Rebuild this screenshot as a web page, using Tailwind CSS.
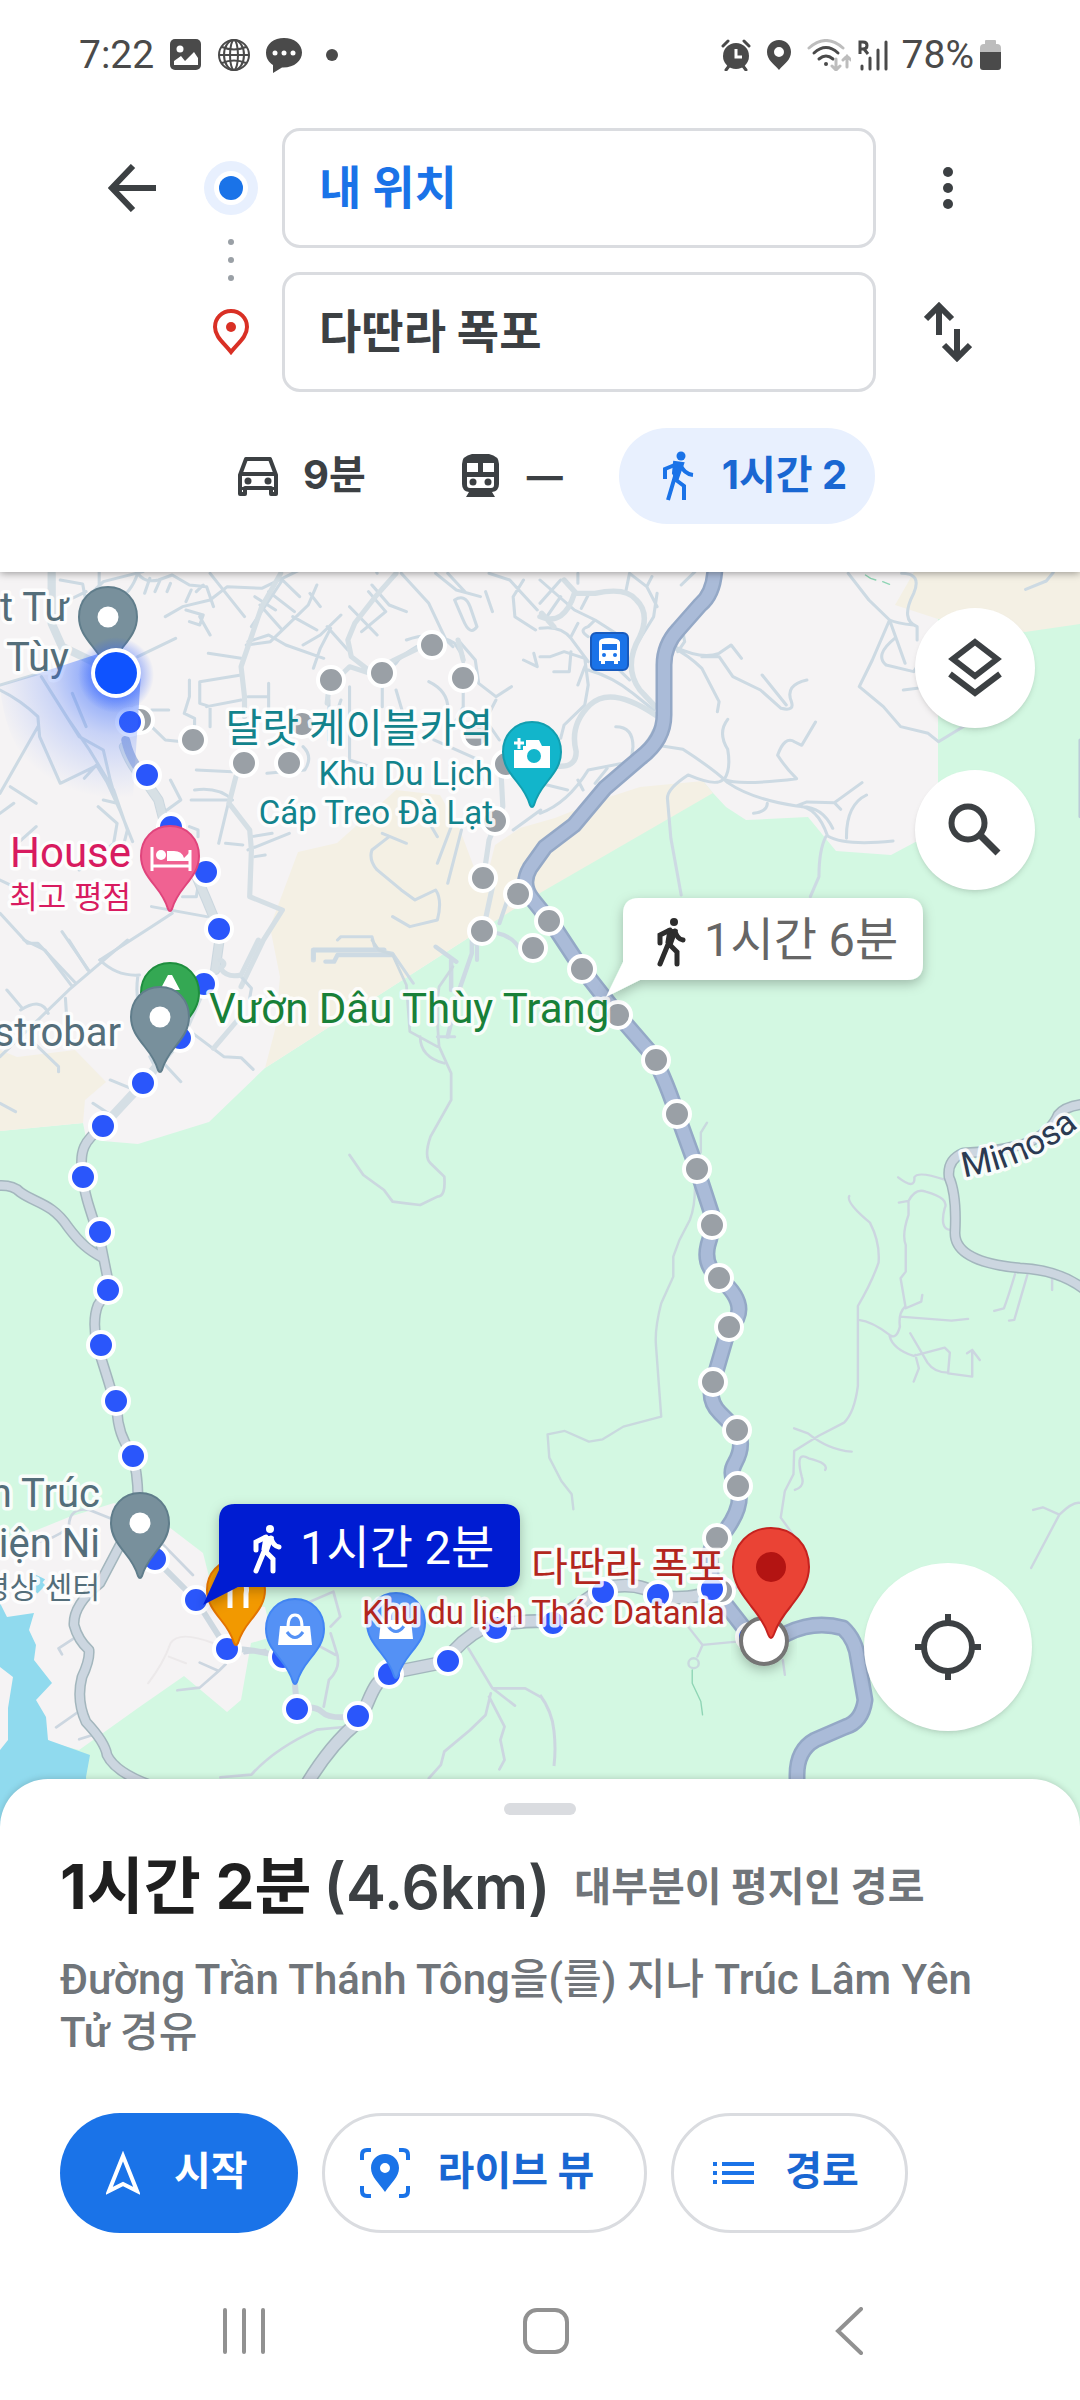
<!DOCTYPE html>
<html lang="ko">
<head>
    <meta charset="UTF-8">
    <meta name="viewport" content="width=device-width, initial-scale=1.0">
    <title>다딴라 폭포 - 도보 경로</title>
    <script src="https://cdn.jsdelivr.net/npm/@tailwindcss/browser@4"></script>
</head>
<body class="bg-white font-['Inter','Noto_Sans_CJK_KR',sans-serif] text-[#3c4043]">

    <!-- status bar -->
    <div class="relative z-20 flex h-[110px] items-center justify-between bg-white px-[79px] font-['Roboto',sans-serif] text-[39px] text-[#4a4a4a]">
        <div class="flex items-center gap-4">
            <span>7:22</span>
            <svg class="h-8 w-8" viewBox="0 0 32 32"><rect width="31" height="31" rx="5" fill="#4a4a4a"/><circle cx="10" cy="10" r="3.500" fill="#fff"/><path d="M4 22l7-5 4 5 9-9 4 6v7H4z" fill="#fff"/></svg>
            <svg class="h-8 w-8" viewBox="0 0 32 32" fill="none" stroke="#4a4a4a" stroke-width="2"><circle cx="16" cy="16" r="15"/><ellipse cx="16" cy="16" rx="10" ry="15"/><ellipse cx="16" cy="16" rx="4" ry="15"/><path d="M1 16h30M4 8q12 5 24 0M4 24q12-5 24 0"/></svg>
            <svg class="h-9 w-9" viewBox="0 0 36 36"><path d="M18 1C8 1 0 7 0 15.500c0 6 3 10 7 12.500v8l9-5.500C28 31 36 24 36 15.500 36 7 28 1 18 1z" fill="#4a4a4a"/><g fill="#fff"><circle cx="9" cy="16" r="2.500"/><circle cx="18" cy="16" r="2.500"/><circle cx="27" cy="16" r="2.500"/></g></svg>
            <span class="ml-2 h-3 w-3 rounded-full bg-[#4a4a4a]"></span>
        </div>
        <div class="flex items-center">
            <svg class="h-8 w-[30px]" viewBox="0 0 30 32"><circle cx="15" cy="17" r="13" fill="#4a4a4a"/><path d="M2 7l5-5M28 7l-5-5M5 31l3-4M25 31l-3-4" stroke="#4a4a4a" stroke-width="3" stroke-linecap="round"/><path d="M15 10v8h6" stroke="#fff" stroke-width="3" fill="none"/></svg>
            <svg class="ml-4 h-8 w-6" viewBox="0 0 24 32"><path d="M12 1C5 1 0 6 0 13c0 8 7 12 12 18 5-6 12-10 12-18C24 6 19 1 12 1zm0 7a5 5 0 110 10 5 5 0 010-10z" fill="#4a4a4a"/></svg>
            <svg class="ml-4 h-8 w-11" viewBox="0 0 44 32" fill="none" stroke-width="3" stroke-linecap="round"><path d="M2 9Q19-6 36 9" stroke="#bdbdbd"/><path d="M7 14q12-11 24 0M12 20q7-6 14 0" stroke="#4a4a4a"/><circle cx="19" cy="25" r="2" fill="#4a4a4a" stroke="none"/><path d="M29 20v11m-4-4l4 4 4-4M40 28V17m-4 4l4-4 4 4" stroke="#bdbdbd"/></svg>
            <svg class="ml-[7px] h-8 w-[30px]" viewBox="0 0 30 32" fill="none" stroke="#4a4a4a"><path d="M4 27v3M12 19v11M20 11v19M28 3v27" stroke-width="3" stroke-linecap="round"/><path d="M2 15V3h3q4 0 4 3.500T5 10H2M6 10l4 5" stroke-width="3"/></svg>
            <span class="ml-[14px]">78%</span>
            <svg class="ml-[6px] h-8 w-[21px]" viewBox="0 0 21 32"><path d="M5 2q0-1 1-1h9q1 0 1 1v3h1q4 0 4 4v4H0V9q0-4 4-4h1z" fill="#bdbdbd"/><path d="M0 13h21v15q0 3-3 3H3q-3 0-3-3z" fill="#4a4a4a"/></svg>
        </div>
    </div>

    <!-- directions header -->
    <header class="relative z-10 bg-white pb-12 pt-[18px] shadow-[0_1px_8px_rgba(0,0,0,0.4)]">
        <div class="grid grid-cols-[96px_78px_1fr_96px] gap-y-6 px-[108px]">
            <button class="flex h-[120px] items-center" aria-label="뒤로">
                <svg class="h-12 w-12" viewBox="0 0 48 48" fill="none" stroke="#3c4043" stroke-width="6"><path d="M48 24H4M25 2L4 24l21 22"/></svg>
            </button>
            <svg class="row-span-2 h-[264px] w-[54px]" viewBox="0 0 54 264">
                <circle cx="27" cy="60" r="27" fill="#e8f0fe"/><circle cx="27" cy="60" r="17" fill="#fff"/><circle cx="27" cy="60" r="12" fill="#1a73e8"/>
                <g fill="#9aa0a6"><circle cx="27" cy="114" r="3"/><circle cx="27" cy="132" r="3"/><circle cx="27" cy="150" r="3"/></g>
                <path d="M27 183c-9 0-16 7-16 16 0 10 9 16 16 25 7-9 16-15 16-25 0-9-7-16-16-16z" fill="none" stroke="#d93025" stroke-width="4"/><circle cx="27" cy="199" r="5" fill="#d93025"/>
            </svg>
            <input class="h-[120px] w-full rounded-[18px] border-[3px] border-[#dadce0] px-[34px] pb-2 text-[46px] font-bold text-[#1a73e8]" type="text" aria-label="출발지" value="내 위치">
            <button class="flex h-[120px] items-center justify-end" aria-label="옵션 더보기">
                <svg class="h-12 w-12" viewBox="0 0 48 48" fill="#3c4043"><circle cx="24" cy="8" r="5"/><circle cx="24" cy="24" r="5"/><circle cx="24" cy="40" r="5"/></svg>
            </button>
            <span></span>
            <input class="h-[120px] w-full rounded-[18px] border-[3px] border-[#dadce0] px-[34px] pb-2 text-[46px] font-bold text-[#3c4043]" type="text" aria-label="목적지" value="다딴라 폭포">
            <button class="flex h-[120px] items-center justify-end" aria-label="출발지와 목적지 바꾸기">
                <svg class="h-[60px] w-12" viewBox="0 0 48 60" fill="none" stroke="#3c4043" stroke-width="6"><path d="M15 33V4M2 17L15 4l13 13M33 27v29M20 43l13 13 13-13"/></svg>
            </button>
        </div>

        <div class="mt-9 flex gap-4 pl-[197px] text-[40px] font-bold">
            <button class="flex h-24 items-center gap-6 px-10">
                <svg class="h-[42px] w-[42px]" viewBox="0 0 42 42"><path d="M9 4h24l6 16v19h-5v-6H8v6H3V20z" fill="none" stroke="#3c4043" stroke-width="4" stroke-linejoin="round"/><path d="M3 17h36v4H3zM3 32h36v3H3z" fill="#3c4043"/><circle cx="11" cy="26" r="3.500" fill="#3c4043"/><circle cx="31" cy="26" r="3.500" fill="#3c4043"/></svg>
                <span class="pb-0.5">9분</span>
            </button>
            <button class="flex h-24 items-center gap-7 px-10">
                <svg class="h-11 w-[37px]" viewBox="0 0 37 44"><path d="M10 0h17q10 2 10 10v20q0 7-7 8l3 5H4l3-5q-7-1-7-8V10Q0 2 10 0z" fill="#3c4043"/><path d="M5 9h11v9H5zM21 9h11v9H21zM5 23h27v8q0 3-3 3H8q-3 0-3-3z" fill="#fff"/><circle cx="11" cy="28" r="3.500" fill="#3c4043"/><circle cx="26" cy="28" r="3.500" fill="#3c4043"/></svg>
                <span class="text-[36px]">—</span>
            </button>
            <button class="flex h-24 items-center gap-7 rounded-full bg-[#e8f0fe] pl-[43px] pr-7 text-[#1967d2]">
                <svg class="h-[50px] w-8" viewBox="0 0 32 50" fill="none" stroke="#1a73e8" stroke-width="4"><circle cx="19" cy="5" r="4.500" fill="#1a73e8" stroke="none"/><path d="M13 12l7 1-5 14-3-5z" fill="#1a73e8"/><path d="M15 13L3 18v10M18 13q4 10 13 11M14 22L6 49M14 29l8 6v14"/></svg>
                <span class="pb-0.5">1시간 2</span>
            </button>
        </div>
    </header>

    <!-- map -->
    <main class="relative bg-[#d3f8e2]">
        <svg class="block w-full font-['Roboto','Noto_Sans_CJK_KR',sans-serif]" viewBox="0 572 1080 1255">
            <defs>
                <path id="pin" d="M0-30C-17-30-29-17-29 0C-29 12-23 20-15 30C-7 40-4 46-2 53Q0 57 2 53C4 46 7 40 15 30C23 20 29 12 29 0C29-17 17-30 0-30Z"/>
                <g id="walker" fill="none" stroke-width="5" stroke-linecap="round"><circle cx="17" cy="4" r="4" fill="currentColor"/><path d="M12 12l7 1-5 14-4-3z" fill="currentColor" stroke="currentColor" stroke-width="3"/><path d="M13 12L3 17v8M18 13q2 8 8 9M12 24L3 46M13 27l7 7v12" stroke="currentColor"/></g>
                <path id="mimosa" d="M964 1177Q1035 1166 1084 1122"/>
                <radialGradient id="beam" gradientUnits="userSpaceOnUse" cx="116" cy="673" r="125"><stop offset="0.1" stop-color="#1a56ff" stop-opacity="0.6"/><stop offset="0.5" stop-color="#3f70ff" stop-opacity="0.25"/><stop offset="1" stop-color="#5b86ff" stop-opacity="0"/></radialGradient>
                <radialGradient id="glow"><stop offset="0.5" stop-color="#2a5bff" stop-opacity="0.5"/><stop offset="1" stop-color="#2a5bff" stop-opacity="0"/></radialGradient>
                <filter id="shadow" x="-20%" y="-20%" width="140%" height="160%"><feDropShadow dx="0" dy="4" stdDeviation="6" flood-opacity="0.25"/></filter>
            </defs>

            <!-- land use -->
            <rect y="572" width="1080" height="1260" fill="#d3f8e2"/>
            <path d="M914 572H1080V624L1025 632 938 619 890 610Z" fill="#f4f0e4"/>
            <path d="M0 572H914L895 605 938 619V830L891 855 836 851 808 817 746 820 726 807 713 793 703 781 465 940 265 1068 209 1122 138 1144 103 1141 86 1138 83 1123 0 1131Z" fill="#f5f3f4"/>
            <path d="M396 790L440 795 460 830 475 870 485 885 495 845 520 828 555 818 600 800 640 787 703 781 713 793 540 893 465 940 265 1068 275 1030 280 977 270 927 298 852 337 843Z" fill="#f4f0e4"/>
            <path d="M0 1050L17 1057 75 1050 106 1082 85 1100 83 1123 0 1131Z" fill="#f4f0e4"/>
            <path d="M0 1545L69 1517 114 1503 169 1527 203 1553 215 1600 265 1607 272 1637 251 1643 241 1700 227 1712 184 1676 138 1708 103 1733 79 1750 52 1743 0 1700Z" fill="#f5f3f4"/>
            <path d="M0 1603L7 1617 34 1613 29 1630 36 1645 34 1660 52 1683 36 1700 46 1717 48 1740 90 1755 86 1777 90 1832H0Z" fill="#90daee"/>
            <path d="M0 1667L13 1677 8 1708V1740L0 1750Z" fill="#f5f3f4"/>
            <path d="M34 1590l8-10 -8-4M36 1592l8-8" stroke="#90daee" stroke-width="4" fill="none"/>

            <!-- small streets, north west -->
            <g transform="translate(0 560) scale(.3444 .3333)" fill="none" stroke="#cddae3" stroke-width="9" stroke-linejoin="round" stroke-linecap="round">
                <path d="M175 60l65 12 10 55M240 125l60-60 115-30M288 36v45M200 120l50-25M400 40q-20 60-60 80M400 40q20 30 60 20l40-15 50 30 50 5 20 60M420 100l15-45M450 95l15-35M485 95l10-25M540 125l15-35M570 95l20-20M480 170l50-30 80-20 50-40 100 5 120-60M540 150l50 15-10 30-30-10M580 170l30 55M610 40l100 130M740 110l60 40M720 245l60-20 50 30 110 40M605 280l95 15M820 60l50 50M780 95l75 60M755 135l60 70M820 60L730 200M920 75l-25 60-40 40-70 70-70 10M850 170l70 40M900 100l30 40M990 165l-60 60-50 30M950 200l60 70M1015 140l80 85M960 205l-30 60-20 60M1095 40l-10-30M1080 75l50 60 50 20M1070 95l50 60-70 60M1165 40l80 90 50 110 20 20M1265 40l60 50 70 20M1300 40l50 55M1320 120q30-20 45 20l20 60q-20 30-40-20zM1410 95l20 60M1520 60l-30 50 5 60 60 40M1520 300l40 20-10-40M1420 40l60 20 80 90M1330 240l50 60 10 70 50 40 45-30M1210 260q-50 30-60 50l-40 30M1180 240q80-30 140 10l25 40v150l-30 60M955 420v120M1110 380v60M1150 390l20 70M1015 380v220l60 20M990 420l-30 90M1245 365q60 30 55 90M1260 540l130 60 10 60M1345 400v90M1440 420l-30 60 40 60M880 560q30 30 5 70l-110 10M780 370v80M720 410h55M600 440l100-20M610 500v-60l-30-10V365l120-20M550 360v50l-15 50 30 15v60M440 500l40 40 50 5M440 450l50 0M0 390q60 30 110 80l5 60 60 140 100-50M0 700l110-200M30 680l75 50M0 760l40-30M120 350l110 180 70 40 20 90 20 70-40-10M210 400l40 100M245 655l35-40 30 50 40 90 35 90M200 480l60 90 70 120 40 120-10 40M285 740l55 50-10 60-100 80M495 660l30 60-40 30M550 800l25 10v20M570 630l105 5M565 690q70-10 110 30M555 720h110M635 850l30-130M730 830l60-10M720 870l120-50M655 850l50 5M740 890l30-5M40 860l65-60M0 960l40 20M290 1200l150-100 60-40M180 1115l80 120M0 1060l80 90 30 0 110 120M400 290l110-55M0 375l130-40M440 1040l160 30M530 1010h40l5-30"/>
                <path d="M1130 830l-50 40q-10 30 15 60l70 60 40 30 60-30q20 30 5 90l-80 20-50-30M1110 820l70 30M1170 790l60-30 40 70M1340 810l-40 160M1310 800l-40 110M980 1140l10-10h90l10 40 50 10 60 90M1490 810l80-60"/>
                <path d="M1445 1120q50 10 70 60M1385 1140v60M1480 1000l-30 90" stroke-width="12"/>
                <path d="M150 40v150l30 70 120 60 50 80" stroke="#d5dfe5" stroke-width="24"/>
                <path d="M815 40l-55 100-40 120-20 60 10 90v60M685 650l-20 80 60 80 5 60-5 140 95 40-55 90-65 140M1150 40l-60 70-60 80-20 50 10 50 50 40M1330 240l15 60M1455 640l5 100-40 100-10 70M1430 980l-25 120-30 50M950 430l5-50 60-60 60 20 70-40 100-50M910 1200v-30h205" stroke="#d5dfe5" stroke-width="15"/>
                <path d="M360 560q20 60 60 100l40 60 30 120 60 60 50 120 40 100-15 110" stroke="#cbd7df" stroke-width="30"/>
                <path d="M360 560q20 60 60 100l40 60 30 120 60 60 50 120 40 100-15 110" stroke="#d7e0e5" stroke-width="24"/>
                <path d="M365 540q10 50 40 90" stroke="#a9bae0" stroke-width="26"/>
            </g>

            <!-- small streets, north east -->
            <g transform="translate(540 560) scale(.3444 .3333)" fill="none" stroke="#cddae3" stroke-width="9" stroke-linejoin="round" stroke-linecap="round">
                <path d="M0 60l100 90 60 30M0 130l60-70M110 40v30M60 110l-40 60M140 105l-20 40M250 90l10-50 50 40 15-30M340 100l-10 70-60 100M310 80l30 60M410 75l40-40M0 205q60-10 90 30l50 70M110 190l-20 40M140 230q-30-20 0-30l20-20 60 40M0 290h30l40-15 60 20 10 80-10 60-60 60-10 40M90 275l-5 60H40M130 320l-20 55M140 330q70 20 130 70l60 50M220 320l40 40M220 500q50 0 50 60l-5 40M0 760q80-30 140-130l100-20q70-50 90-100M110 660l15 30M0 670l80 20M195 625l-35 45"/>
                <path d="M415 215l5 30-20 30M390 265q40 20 80 60 30 60 50 100l-5 30M390 260q80 40 130 20l35-25 30 40M470 290h50l40 60 80 40 60 55q40 10 30-20-20-50 45-65M645 345l70 90M355 558l60 10q90 60 130 100 70 50 200 70 60 0 90 90 50 30 190 15M545 478q-30 40 0 90 10 60-10 90 40 20 210-2-30-30-55-70 20-60 50-40l20 10 40-70M530 660q-20 20-100-15-60 40-60 70l10 120 30 170M745 738l30-12 80 2 80-60M855 728l18 20M760 740q60 0 90 65M660 730q0 25-40 30M948 705q-60 30-58 130M830 830q-20 40-20 120l-25 60"/>
                <path d="M895 40l60 80 60 60q20 10 70 15M1015 180l-50 120-38 80 70 60 50 60 80 20 30 25 80-50M1030 235q-60 50-25 80l80 20 20-30M1015 180l45 130M1050 40q60 0 35 60-40 80 10 100v40M1055 390l40-5M1410 88l60-25 20-25"/>
                <path d="M0 170q70 30 100-70h60q90-20 120 20 40 40 10 110-50 90 0 160l45 50M40 200l-35-40M335 465q-130-90-190-30-60 60-40 140 0 50-60 43M105 100L70 60" stroke="#d5dfe5" stroke-width="16"/>
                <path d="M945 45l15 10 15 5M995 65l20 8" stroke="#8fd5b5" stroke-width="4"/>
                <path d="M1568 540v230" stroke="#bccbd8" stroke-width="9"/>
            </g>

            <!-- west side below the town -->
            <g transform="translate(0 940) scale(.3444 .3333)" fill="none" stroke="#cddae3" stroke-width="9" stroke-linejoin="round" stroke-linecap="round">
                <path d="M70 0l60 30 80 110M200 0l55 90M370 0L200 150 0 350M290 60q50 50 115 45M20 150l45 55M60 210q60-40 80 10M190 175l5 80M90 300l80 80v15M320 420l60 25M270 490l60 40M0 490l45 25M480 375l45 50M435 350l20 40M560 280l90 70 50 3 35 35M400 110q-10 80 20 120M700 110l30 35-5 30"/>
                <path d="M640 60q20 10 0 25 20 30 60 20L750 0M690 240l-70 85M590 110l-50 130" stroke="#d5dfe5" stroke-width="15"/>
                <path d="M910 55V30h205M945 65h25l10-20 160 0M1265 20l60 45M1310 60v90M1370 0v40l-40 120-30 130" stroke-width="13"/>
                <path d="M1080 0l20 30 40 15 40 90 10 140 80 45M1220 290q0 60 70 80M1275 320q-10-120 0-180l40-60M1275 320l35 80v80l-60 110q-20 60 0 80l40 40q5 60-20 60l-50 25-40-5-40-5-25-35-60-45-40-60" stroke="#cbd8df" stroke-width="8"/>
                <path d="M1270 290h50"/>
            </g>

            <!-- forest tracks -->
            <g transform="translate(540 940) scale(.3444 .3333)" fill="none" stroke="#c9d9de" stroke-width="7" stroke-linejoin="round" stroke-linecap="round">
                <path d="M485 548l-18 30v60M450 740q0 60-15 100l-30 60-18 50v60l-35 80q-20 80-15 130l15 210-110 30-60 38-40 7-70-32-50 10 5 70 35 70 30 40 5 45"/>
                <path d="M898 768q-10 20 60 80 30 60 25 120-20 60-60 130v240q-10 80-40 110l-75 40-70 45-2 70-25 50-12 80 42 60-35 60-40 45-70 30-50 30M1040 712q50 40 47 0 10-20 88 7M1042 788l28-5q20-40 50-28 70 20 55 50-15 60 15 65M1070 785v40q-20 60-8 90v80l-15 20 15 90 45-20 3-20M1060 1100q-20 20-15 60-10 40-30 25-50-40-90-45M1045 1130l150 12 48-5M1015 1188q10 40 70 60l90-25 15 15-5 60q-40 0-60-30L1075 1180M1090 1245l10 40-15 40M1185 1300l70 10 0-80-15 10M1255 1230l22 30M738 1465l40 15q60 50 127 55M740 1650q30-10 20-40-20-80 20-55 60 15 48 35M1432 1710l28-8 48 22q40-40 60-35M1508 1724l-82 160M1380 1000q-20 70-33 105l-28 8M1415 1005l-38 135-15 2M1487 1015v35M430 2060l42 55 100-10M472 2115l-15 35M705 2160l6 45" stroke="#ccd6e0"/>
                <circle cx="446" cy="2170" r="15"/>
                <path d="M442 2190v40l25 55 5 40" stroke="#8fd5b5" stroke-width="4"/>
            </g>
            <g transform="translate(0 1340) scale(.3444 .3333)" fill="none" stroke="#ccd6e0" stroke-width="8" stroke-linejoin="round" stroke-linecap="round">
                <path d="M90 610q70-10 110-50 0-60 60-50l60 25M640 1312l90-8q70-80 190-135l80-8M940 1100l15-80q40-40 20-90l-15-50M930 920l45 25M960 860l28-30-20-75-90 40M1360 925l70 120h95l43 25M1430 1045l65 52M1420 1070l45 90-12 40 12 60-15 28M1425 1060l-15 65-45 45-75 65-10 40-35 40M470 610l90 95M230 885l-60 40 10 18M235 1110l-72 52M285 1180l-55 18M580 968l55 25-55 50-65 8M635 993l20-20M710 940l60-10"/>
                <path d="M620 910q-100-40-125 0-20 60-65 120M490 950l50 20" stroke="#ece9ea" stroke-width="6"/>
            </g>
            <path d="M540 1695q12 16 14 36 2 18 0 35" stroke="#ccd6e0" stroke-width="3" fill="none"/>

            <!-- secondary roads: casing, then fill -->
            <g fill="none" stroke-linejoin="round" stroke-linecap="round">
                <g stroke="#a3b6bd" stroke-width="11">
                    <path id="road-west" d="M103 1126C85 1140 78 1150 83 1177 84 1195 92 1215 100 1240L108 1280Q108 1292 98 1305 92 1320 97 1345L108 1380 117 1410Q118 1435 131 1452 138 1470 138 1500"/>
                    <path id="road-branch" d="M-5 1186Q12 1184 20 1192C35 1203 52 1203 68 1227 80 1243 88 1250 103 1258"/>
                    <path id="road-south" d="M120 1545L100 1583Q73 1605 74 1625 78 1640 89 1650 90 1660 82 1677 76 1700 86 1722 105 1742 107 1755 115 1772 150 1785"/>
                    <path id="road-mimosa" d="M1085 1104Q1065 1106 1058 1115 1052 1130 1030 1142 1000 1152 963 1153 947 1160 949 1177 957 1195 955 1233 955 1262 1020 1268 1060 1270 1085 1290"/>
                </g>
                <g stroke="#ccd6e0" stroke-width="8">
                    <use href="#road-west"/>
                    <use href="#road-branch"/>
                    <use href="#road-south"/>
                    <use href="#road-mimosa"/>
                </g>
                <g stroke="#a3b6bd" stroke-width="14">
                    <path id="road-datanla" d="M305 1787Q330 1745 358 1722C372 1700 370 1680 395 1672L445 1662Q460 1640 485 1627 520 1620 553 1621 580 1605 603 1588 640 1580 660 1597 700 1600 712 1589"/>
                </g>
                <use href="#road-datanla" stroke="#ccd6e0" stroke-width="11"/>
                <path d="M204 984L180 1038 143 1083 103 1126" stroke="#d5dfe5" stroke-width="9"/>
                <path d="M130 1535L155 1559 196 1600 227 1649Q250 1648 283 1657M295 1685L297 1709Q315 1705 322 1712 330 1720 358 1716" stroke="#cdd8e0" stroke-width="6"/>

                <!-- highway -->
                <g stroke="#94a8c6" stroke-width="17">
                    <path id="highway" d="M715 560Q716 592 700 605L678 630Q664 645 664 665V715Q664 740 640 758L605 788 574 825 545 847 530 868Q520 885 533 900L553 925 582 969 618 1015 650 1052Q662 1070 677 1114L697 1169 712 1215Q713 1230 708 1245 703 1265 719 1278 745 1300 737 1318L729 1327 713 1382Q707 1400 720 1413L737 1430Q745 1445 735 1463 728 1475 738 1486 744 1505 726 1530 708 1545 710 1560L712 1587 747 1632Q770 1645 788 1633 815 1620 843 1628 856 1640 858 1660L865 1700Q862 1722 845 1727L815 1740Q797 1750 797 1775V1832"/>
                </g>
                <use href="#highway" stroke="#aabbd8" stroke-width="12"/>
            </g>

            <!-- alternative route -->
            <g fill="#9aa0a6" stroke="#fff" stroke-width="4">
                <circle cx="140" cy="720" r="13"/><circle cx="193" cy="740" r="13"/><circle cx="244" cy="763" r="13"/><circle cx="289" cy="763" r="13"/><circle cx="302" cy="724" r="13"/><circle cx="331" cy="680" r="13"/><circle cx="382" cy="673" r="13"/><circle cx="432" cy="645" r="13"/><circle cx="463" cy="678" r="13"/><circle cx="476" cy="735" r="13"/><circle cx="506" cy="764" r="13"/><circle cx="495" cy="821" r="13"/><circle cx="483" cy="878" r="13"/><circle cx="518" cy="894" r="13"/><circle cx="482" cy="931" r="13"/><circle cx="533" cy="948" r="13"/><circle cx="549" cy="921" r="13"/><circle cx="582" cy="969" r="13"/><circle cx="618" cy="1015" r="13"/><circle cx="656" cy="1060" r="13"/><circle cx="677" cy="1114" r="13"/><circle cx="697" cy="1169" r="13"/><circle cx="712" cy="1225" r="13"/><circle cx="719" cy="1278" r="13"/><circle cx="729" cy="1327" r="13"/><circle cx="713" cy="1382" r="13"/><circle cx="737" cy="1430" r="13"/><circle cx="738" cy="1486" r="13"/><circle cx="717" cy="1538" r="13"/><circle cx="721" cy="1591" r="13"/>
            </g>
            <!-- selected route -->
            <g fill="#2a56fb" stroke="#fff" stroke-width="4">
                <circle cx="130" cy="722" r="13"/><circle cx="147" cy="775" r="13"/><circle cx="171" cy="827" r="13"/><circle cx="206" cy="872" r="13"/><circle cx="219" cy="929" r="13"/><circle cx="204" cy="984" r="13"/><circle cx="180" cy="1038" r="13"/><circle cx="143" cy="1083" r="13"/><circle cx="103" cy="1126" r="13"/><circle cx="83" cy="1177" r="13"/><circle cx="100" cy="1232" r="13"/><circle cx="108" cy="1290" r="13"/><circle cx="101" cy="1345" r="13"/><circle cx="116" cy="1401" r="13"/><circle cx="133" cy="1456" r="13"/><circle cx="155" cy="1559" r="13"/><circle cx="196" cy="1600" r="13"/><circle cx="227" cy="1649" r="13"/><circle cx="283" cy="1657" r="13"/><circle cx="297" cy="1709" r="13"/><circle cx="358" cy="1716" r="13"/><circle cx="389" cy="1674" r="13"/><circle cx="448" cy="1661" r="13"/><circle cx="496" cy="1628" r="13"/><circle cx="553" cy="1623" r="13"/><circle cx="603" cy="1592" r="13"/><circle cx="658" cy="1595" r="13"/><circle cx="712" cy="1589" r="13"/><circle cx="750" cy="1637" r="13"/>
            </g>

            <!-- place labels -->
            <g class="text-[40px]" stroke="#fff" stroke-opacity="0.85" stroke-width="7" stroke-linejoin="round" paint-order="stroke">
                <g fill="#546e7a" text-anchor="end">
                    <text x="69" y="621">t Tư</text>
                    <text x="69" y="671">Tùy</text>
                    <text x="121" y="1046">strobar</text>
                    <text x="100" y="1507">n Trúc</text>
                    <text x="100" y="1557">iện Ni</text>
                    <text class="text-[30px]" x="100" y="1598">명상 센터</text>
                </g>
                <g fill="#d81b60" text-anchor="end">
                    <text class="text-[42px]" x="131" y="867">House</text>
                    <text class="text-[31px]" x="131" y="908">최고 평점</text>
                </g>
                <g fill="#12838c" text-anchor="end">
                    <text x="493" y="742">달랏 케이블카역</text>
                    <text class="text-[33px]" x="493" y="785">Khu Du Lịch</text>
                    <text class="text-[33px]" x="493" y="824">Cáp Treo Đà Lạt</text>
                </g>
                <text class="text-[42px]" x="209" y="1023" fill="#188038">Vườn Dâu Thùy Trang</text>
                <text class="text-[35px]" fill="#2b3a52"><textPath href="#mimosa">Mimosa</textPath></text>
            </g>

            <!-- current position -->
            <path d="M116 648L0 686Q10 800 132 812L141 673Z" fill="url(#beam)"/>
            <g stroke-width="2">
                <use href="#pin" x="108" y="617" fill="#78909c" stroke="#607d8b"/>
                <circle cx="108" cy="617" r="10.500" fill="#fff" stroke="none"/>
                <circle cx="116" cy="675" r="38" fill="url(#glow)" stroke="none"/>
                <circle cx="116" cy="673" r="25" fill="#fff" stroke="none"/>
                <circle cx="116" cy="673" r="21" fill="#0f53ff" stroke="none"/>

                <use href="#pin" x="170" y="856" fill="#f06292" stroke="#e0447c"/>
                <path d="M152 847v24M152 866h38M190 871V850" fill="none" stroke="#fff" stroke-width="3"/><circle cx="161" cy="855" r="5" fill="#fff"/><path d="M167 861V851h7q8 0 10 7l5-5v8z" fill="#fff"/>

                <use href="#pin" x="532" y="752" fill="#12b5cb" stroke="#129eaf"/>
                <path d="M514 750h9v-4h3v-6h13l3 6h8v22h-36z" fill="#fff"/><path d="M519 738v11M514 743h10" stroke="#fff" stroke-width="3"/><circle cx="534" cy="756" r="7" fill="#12b5cb"/>

                <use href="#pin" x="170" y="993" fill="#34a853" stroke="#1e8e3e"/>
                <path d="M168 975h4l8 15h-20z" fill="#fff"/>
                <use href="#pin" x="160" y="1017" fill="#78909c" stroke="#607d8b"/><circle cx="160" cy="1017" r="10.500" fill="#fff"/>
                <use href="#pin" x="140" y="1523" fill="#78909c" stroke="#607d8b"/><circle cx="140" cy="1523" r="10.500" fill="#fff"/>

                <use href="#pin" x="236" y="1590" fill="#f29900" stroke="#e37400"/>
                <path d="M230 1608v-28M243 1580q5 6 3 14v14" fill="none" stroke="#fff" stroke-width="5"/>
                <g id="shop">
                    <use href="#pin" x="295" y="1629" fill="#5491f5" stroke="#4285f4"/>
                    <path d="M280 1626h30l2 19h-34z" fill="#fff"/><path d="M288 1627q0-12 7-12t7 12" fill="none" stroke="#fff" stroke-width="3"/><path d="M287 1632q8 11 16 0" fill="none" stroke="#5491f5" stroke-width="3"/>
                </g>
                <use href="#shop" x="101" y="-6"/>
            </g>

            <!-- bus stop -->
            <rect x="591" y="633" width="37" height="37" rx="5" fill="#1a73e8" stroke="#185abc" stroke-width="2"/>
            <path d="M599 642q0-4 10-4t11 4v19h-2v3h-4v-3h-9v3h-4v-3h-2z" fill="#fff"/><path d="M602 644h15v6h-15z" fill="#1a73e8"/><circle cx="604" cy="655" r="2" fill="#1a73e8"/><circle cx="615" cy="655" r="2" fill="#1a73e8"/>

            <!-- destination -->
            <g text-anchor="end" fill="#b3261e" stroke="#fff" stroke-opacity="0.85" stroke-width="7" stroke-linejoin="round" paint-order="stroke">
                <text class="text-[40px]" x="725" y="1581">다딴라 폭포</text>
                <text class="text-[33px]" x="725" y="1624">Khu du lịch Thác Datanla</text>
            </g>
            <circle cx="764" cy="1641" r="23" fill="#fff" stroke="#757575" stroke-width="4" filter="url(#shadow)"/>
            <path d="M771 1528C749 1528 733 1545 733 1567C733 1583 742 1594 751 1606C760 1617 765 1625 768 1634Q771 1642 774 1634C777 1625 782 1617 791 1606C800 1594 809 1583 809 1567C809 1545 793 1528 771 1528Z" fill="#ea4335" stroke="#c5221f" stroke-width="2"/>
            <circle cx="771" cy="1567" r="15" fill="#b31412"/>

            <!-- route time bubbles -->
            <g class="text-[47px]">
                <path filter="url(#shadow)" d="M639 898H907Q923 898 923 914V964Q923 980 907 980H640L606 997 623 962V914Q623 898 639 898Z" fill="#fff"/>
                <use href="#walker" x="657" y="918" class="text-[#2d2d2d]"/>
                <text x="704" y="956" fill="#666">1시간 6분</text>
                <path filter="url(#shadow)" d="M235 1504H504Q520 1504 520 1520V1571Q520 1587 504 1587H238L203 1605 219 1570V1520Q219 1504 235 1504Z" fill="#041ed2"/>
                <use href="#walker" x="253" y="1525" class="text-white"/>
                <text x="300" y="1564" fill="#fff">1시간 2분</text>
            </g>
        </svg>

        <div class="absolute right-[45px] top-9 flex flex-col gap-[42px]">
            <button class="flex size-[120px] items-center justify-center rounded-full bg-white shadow-md" aria-label="지도 유형">
                <svg class="size-[60px]" viewBox="0 0 60 60" fill="none" stroke="#3c4043" stroke-width="6"><path d="M30 4l22 17-22 17L8 21zM5 36l25 19 25-19"/></svg>
            </button>
            <button class="flex size-[120px] items-center justify-center rounded-full bg-white shadow-md" aria-label="경로를 따라 검색">
                <svg class="size-[60px]" viewBox="0 0 60 60" fill="none" stroke="#3c4043"><circle cx="23" cy="23" r="16.500" stroke-width="6"/><path d="M36 36l17 17" stroke-width="7"/></svg>
            </button>
        </div>
        <button class="absolute bottom-24 right-12 flex size-[168px] items-center justify-center rounded-full bg-white shadow-md" aria-label="내 위치로 이동">
            <svg class="size-[66px]" viewBox="0 0 66 66" fill="none" stroke="#3c4043" stroke-width="6"><circle cx="33" cy="33" r="24"/><path d="M33 0v9M33 57v9M0 33h9M57 33h9"/></svg>
        </button>
    </main>

    <!-- route sheet -->
    <section class="relative -mt-12 rounded-t-[48px] bg-white pb-7 pt-6 shadow-[0_-1px_6px_rgba(0,0,0,0.15)]">
        <div class="mx-auto h-3 w-[72px] rounded-md bg-[#dadce0]"></div>
        <div class="px-[60px]">
            <h1 class="mt-[30px] flex items-center text-[62px] leading-[84px]">
                <span class="font-bold text-[#1f1f1f]">1시간 2분</span>
                <span class="ml-3 text-[60px] font-semibold">(4.6km)</span>
                <span class="ml-6 text-[40px] font-bold text-[#70757a]">대부분이 평지인 경로</span>
            </h1>
            <p class="mt-6 font-['Roboto','Noto_Sans_CJK_KR',sans-serif] text-[42px] font-medium leading-[53px] text-[#70757a]">Đường Trần Thánh Tông을(를) 지나 Trúc Lâm Yên Tử 경유</p>
            <div class="mt-[54px] flex gap-6 text-[40px] font-bold text-[#1967d2]">
                <button class="flex h-[120px] items-center gap-[34px] rounded-full bg-[#1a73e8] pl-[46px] pr-[50px] text-white">
                    <svg class="h-11 w-[34px]" viewBox="0 0 34 44" fill="none" stroke="#fff" stroke-width="4"><path d="M17 5L3 40l14-7 14 7z"/></svg>
                    <span class="pb-1">시작</span>
                </button>
                <button class="flex h-[120px] items-center gap-7 rounded-full border-[3px] border-[#dadce0] pl-[35px] pr-[50px]">
                    <svg class="size-[50px]" viewBox="0 0 50 50"><path d="M2 12V7q0-5 5-5h4M39 2h4q5 0 5 5v5M48 38v5q0 5-5 5h-4M11 48H7q-5 0-5-5v-5" fill="none" stroke="#1a73e8" stroke-width="4"/><path d="M25 6c-8 0-14 6-14 14 0 9 8 15 14 24 6-9 14-15 14-24 0-8-6-14-14-14zm0 9a5 5 0 110 10 5 5 0 010-10z" fill="#1a73e8"/></svg>
                    <span class="pb-1">라이브 뷰</span>
                </button>
                <button class="flex h-[120px] items-center gap-[31px] rounded-full border-[3px] border-[#dadce0] pl-[39px] pr-[46px]">
                    <svg class="h-6 w-[41px]" viewBox="0 0 41 24" fill="#1a73e8"><path d="M0 1h4v4H0zM9 1h32v4H9zM0 10h4v4H0zM9 10h32v4H9zM0 19h4v4H0zM9 19h32v4H9z"/></svg>
                    <span class="pb-1">경로</span>
                </button>
            </div>
        </div>
    </section>

    <!-- system navigation -->
    <nav class="relative grid h-[140px] grid-cols-3 items-center justify-items-center bg-white pl-[93px] pr-[81px]">
        <button aria-label="최근 앱"><svg class="h-12 w-12" viewBox="0 0 48 48" stroke="#919191" stroke-width="4" stroke-linecap="round"><path d="M5 3v42M24 3v42M43 3v42"/></svg></button>
        <button aria-label="홈"><svg class="h-12 w-12" viewBox="0 0 48 48" fill="none" stroke="#919191" stroke-width="4"><rect x="3" y="3" width="42" height="42" rx="12"/></svg></button>
        <button aria-label="뒤로"><svg class="h-12 w-12" viewBox="0 0 48 48" fill="none" stroke="#919191" stroke-width="4" stroke-linecap="round"><path d="M37 2L14 24l23 22"/></svg></button>
    </nav>

</body>
</html>
